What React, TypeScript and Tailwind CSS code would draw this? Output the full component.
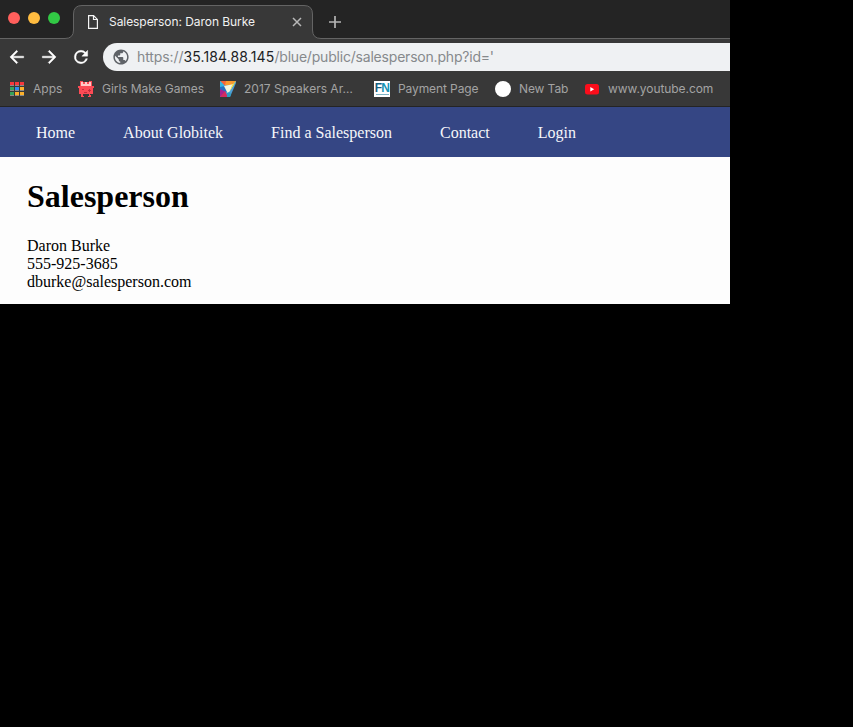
import React from "react";

const UI = "font-['Inter',sans-serif]";

function TabStrip() {
  return (
    <div className="relative flex h-[39px] items-start bg-[#242424]">
      <svg className="absolute left-0 top-0" width="730" height="39" viewBox="0 0 730 39">
        <path
          d="M-1 38.5H65Q73.500 38.500 73.500 30V14Q73.500 5.500 82 5.500H304Q312.500 5.500 312.500 14V30Q312.500 38.500 321 38.500H731V41H-1Z"
          fill="#383838"
          stroke="#646464"
        />
      </svg>
      <div className="relative flex gap-2 pl-2 pt-3">
        <span className="h-3 w-3 rounded-full bg-[#ff5f5c]" />
        <span className="h-3 w-3 rounded-full bg-[#ffbc40]" />
        <span className="h-3 w-3 rounded-full bg-[#32c845]" />
      </div>
      <div className="relative ml-[27px] flex h-8 w-[215px] items-center pt-[12px]">
        <svg className="shrink-0" width="12" height="16" viewBox="0 0 12 16" fill="none" stroke="#f5f5f5" strokeWidth="1.2">
          <path d="M1.6 1.600H6.600L10.400 5.400V14.400H1.600Z M6.500 1.600V5.500H10.400" />
        </svg>
        <span className="ml-[10px] w-[183px] whitespace-nowrap text-[12px] leading-4 tracking-[-0.06px] text-[#f1f1f1]">
          Salesperson: Daron Burke
        </span>
        <svg className="shrink-0" width="10" height="10" viewBox="0 0 10 10" stroke="#b8b8b8" strokeWidth="1.5">
          <path d="M1 1L9 9M9 1L1 9" />
        </svg>
      </div>
      <svg className="relative ml-[27px] mt-4" width="12" height="12" viewBox="0 0 12 12" stroke="#b4b4b4" strokeWidth="1.7">
        <path d="M6 0V12M0 6H12" />
      </svg>
    </div>
  );
}

function Toolbar() {
  return (
    <div className="flex h-[35px] items-center bg-[#383838] pl-[7px] pt-[1px]">
      <svg width="20" height="20" viewBox="0.500 0 24 24" fill="#fff" stroke="#fff" strokeWidth=".5">
        <path d="M20.500 11H7.830l5.590-5.590L12 4l-8 8 8 8 1.410-1.410L7.830 13H20.500v-2z" />
      </svg>
      <svg className="ml-3" width="20" height="20" viewBox="-.5 0 24 24" fill="#fff" stroke="#fff" strokeWidth=".5">
        <path d="M12 4l-1.410 1.410L16.170 11H3.500v2h12.670l-5.580 5.590L12 20l8-8z" />
      </svg>
      <svg className="ml-3" width="20" height="20" viewBox="0 0 24 24" fill="#fff" stroke="#fff" strokeWidth=".5">
        <path d="M17.650 6.350A7.958 7.958 0 0 0 12 4a8 8 0 1 0 7.730 10h-2.080A6 6 0 1 1 12 6c1.660 0 3.140.69 4.220 1.780L13 11h7V4l-2.350 2.350z" />
      </svg>
      <div className="ml-[12px] flex h-7 flex-1 items-center rounded-l-full bg-[#eff1f3] pl-[10px]">
        <svg width="16" height="16" viewBox="1.5 1.500 21 21" fill="#5f6368">
          <path d="M12 2C6.480 2 2 6.480 2 12s4.480 10 10 10 10-4.480 10-10S17.520 2 12 2zm-1 17.930c-3.950-.49-7-3.850-7-7.930 0-.62.080-1.210.210-1.790L9 15v1c0 1.100.9 2 2 2v1.930zm6.900-2.540c-.26-.81-1-1.390-1.900-1.390h-1v-3c0-.55-.45-1-1-1H8v-2h2c.55 0 1-.45 1-1V7h2c1.100 0 2-.9 2-2v-.41c2.930 1.190 5 4.060 5 7.410 0 2.080-.8 3.970-2.100 5.390z" />
        </svg>
        <span className="ml-2 whitespace-nowrap text-[14px] leading-5 tracking-[-0.2px] text-[#86898c]">
          <span className="tracking-[-0.1px]">https://</span>
          <span className="tracking-[0.13px] text-[#202124]">35.184.88.145</span>/blue/public/salesperson.php?id='
        </span>
      </div>
    </div>
  );
}

const appColors = ["#f4373c", "#f4373c", "#f4373c", "#35a35a", "#2f8bf0", "#fbb02b", "#35a35a", "#fbb02b", "#fbb02b"];

function AppsIcon() {
  return (
    <svg width="14" height="14" viewBox="0 0 14 14" shapeRendering="crispEdges">
      {appColors.map((c, i) => (
        <g key={i}>
          <rect x={(i % 3) * 5} y={Math.floor(i / 3) * 5} width="4" height="3" fill={c} />
          <rect x={(i % 3) * 5} y={Math.floor(i / 3) * 5 + 3} width="4" height="1" fill="#8c8a88" />
        </g>
      ))}
    </svg>
  );
}

function MonsterIcon() {
  return (
    <svg width="16" height="16" viewBox="0 0 16 16" shapeRendering="crispEdges">
      <path d="M2 0H5V1H11V0H14V5H16V7H15V13H12V14H13V16H10V15H11V13H5V15H6V16H3V13H1V7H0V5H2Z" fill="#fb4b55" />
      <path d="M3 1H5V3H7V1H9V3H11V1H13V5H3Z" fill="#ffc9c6" />
      <path d="M4 8H6V9H4ZM11 8H12V9H13V10H12V11H11V10H10V9H11ZM6 11H9V12H6Z" fill="#c42c3b" />
    </svg>
  );
}

function PrismIcon() {
  return (
    <svg width="16" height="16" viewBox="0 0 16 16">
      <path d="M0 0H16V2L10 16H0Z" fill="#4d9fd6" />
      <path d="M0 0H16L5 5Z" fill="#f4633a" />
      <path d="M6 0H16L12 4L5 4Z" fill="#f99a2d" />
      <path d="M0 0L5 5L0 7Z" fill="#35b6df" />
      <path d="M0 6L5 5L7 11L0 10Z" fill="#236fc0" />
      <path d="M0 8L6 11L0 16Z" fill="#a52290" />
      <path d="M0 16L5 10L8 16Z" fill="#d52c60" />
      <path d="M4 5L14 3L8 13Z" fill="#f3f5dc" />
      <path d="M16 0L10 10L12 4Z" fill="#f4df37" />
      <path d="M7 12L9 11L11 13L10 16H7Z" fill="#2b9fc4" />
    </svg>
  );
}

function FnIcon() {
  return (
    <span className="flex h-4 w-4 flex-col items-center overflow-hidden bg-white">
      <span className="mt-[2px] h-[10px] font-['Liberation_Sans',sans-serif] text-[12px] font-bold leading-[10px] tracking-[-0.8px] text-[#17607f]">
        F<span className="text-[#1593b4]">N</span>
      </span>
      <span className="mt-px h-px w-[13px] bg-[#7fb2c4]" />
    </span>
  );
}

function YoutubeIcon() {
  return (
    <svg width="14" height="11" viewBox="0 0 14 11">
      <rect width="14" height="10.500" rx="2.500" fill="#fb0d1b" />
      <path d="M5.300 3L9.200 5.200L5.300 7.400Z" fill="#fff" />
    </svg>
  );
}

function Bookmark({ icon, label, box, text }: { icon: React.ReactNode; label: string; box: string; text: string }) {
  return (
    <div className={`flex shrink-0 items-center ${box}`}>
      {icon}
      <span className={`whitespace-nowrap text-[12px] leading-4 text-[#a3a3a3] ${text}`}>{label}</span>
    </div>
  );
}

function Bookmarks() {
  return (
    <div className="flex h-[33px] items-center border-b border-[#242424] bg-[#383838] pb-[2px] pl-[10px]">
      <Bookmark icon={<AppsIcon />} label="Apps" box="w-[68px]" text="ml-[9px]" />
      <Bookmark icon={<MonsterIcon />} label="Girls Make Games" box="w-[142px]" text="ml-2 tracking-[-0.06px]" />
      <Bookmark icon={<PrismIcon />} label="2017 Speakers Ar…" box="w-[154px]" text="ml-2" />
      <Bookmark icon={<FnIcon />} label="Payment Page" box="w-[121px]" text="ml-2 tracking-[-0.1px]" />
      <Bookmark icon={<span className="h-4 w-4 rounded-full bg-white" />} label="New Tab" box="w-[90px]" text="ml-2 tracking-[-0.1px]" />
      <Bookmark icon={<YoutubeIcon />} label="www.youtube.com" box="w-[140px]" text="ml-[9px] tracking-[-0.06px]" />
    </div>
  );
}

export default function App() {
  return (
    <div className="h-[727px] w-[853px] overflow-hidden bg-black">
      <div className="flex h-[304px] w-[730px] flex-col overflow-hidden bg-[#fdfdfd]">
        <header className={UI}>
          <TabStrip />
          <Toolbar />
          <Bookmarks />
        </header>
        <nav className="flex h-[50px] items-center gap-12 bg-[#354684] pl-9 pt-[2px] font-['Liberation_Serif',serif] text-[16px] text-[#f5f6fa]">
          <a>Home</a>
          <a>About Globitek</a>
          <a>Find a Salesperson</a>
          <a>Contact</a>
          <a>Login</a>
        </nav>
        <main className="pl-[27px] pt-[21px] font-['Liberation_Serif',serif] text-[16px] leading-[18px] text-black">
          <h1 className="text-[32px] font-bold leading-[37px]">Salesperson</h1>
          <p className="mt-[22px]">
            Daron Burke
            <br />
            555-925-3685
            <br />
            dburke@salesperson.com
          </p>
        </main>
      </div>
    </div>
  );
}
